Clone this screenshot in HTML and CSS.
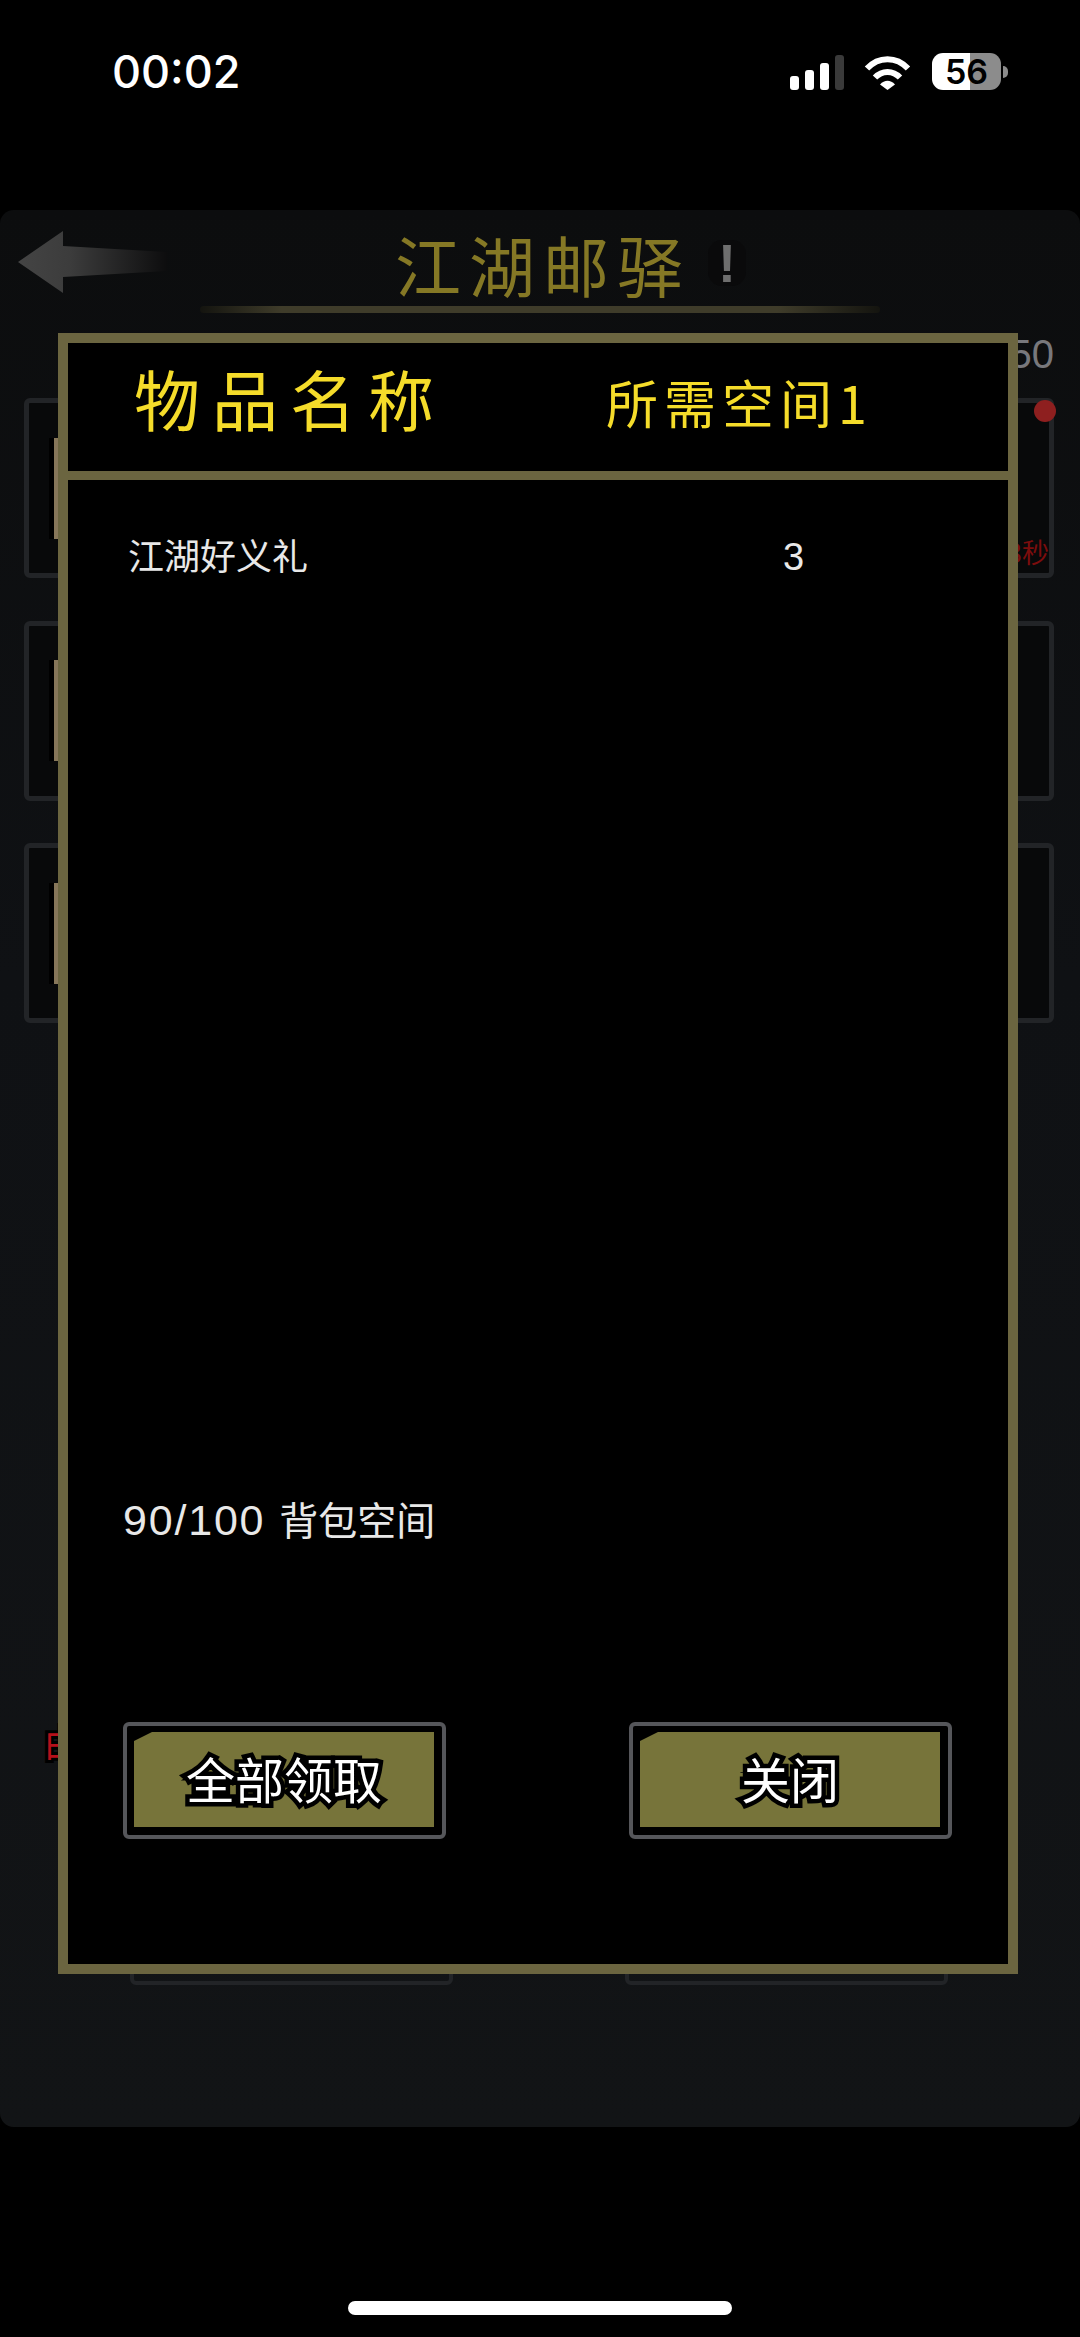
FILE: index.html
```html
<!DOCTYPE html>
<html lang="zh-CN">
<head>
<meta charset="utf-8">
<title>江湖邮驿</title>
<link rel="stylesheet" href="styles.css">
</head>
<body>
<div class="screen">
  <div class="status">
    <span class="time">00:02</span>
    <div class="status-icons">
      <div class="signal">
        <i class="b1"></i><i class="b2"></i><i class="b3"></i><i class="b4"></i>
      </div>
      <svg class="wifi" width="47" height="35" viewBox="0 0 47 35">
        <path d="M3 13.5C14.5 1 32.5 1 44 13.5" fill="none" stroke="#fff" stroke-width="6" stroke-linecap="butt"/>
        <path d="M11 22.5C18 15 29 15 36 22.5" fill="none" stroke="#fff" stroke-width="6" stroke-linecap="butt"/>
        <path d="M16 29.5C20.5 24.5 26.5 24.5 31 29.5L23.5 35Z" fill="#fff"/>
      </svg>
      <div class="battery"><span>56</span></div>
      <div class="nub"></div>
    </div>
  </div>

  <div class="panel">
    <div class="header">
      <div class="header-row">
        <svg class="back" width="152" height="64" viewBox="0 0 152 64">
          <defs>
            <linearGradient id="backFade" x1="0" x2="1" y1="0" y2="0">
              <stop offset="0" stop-color="#444"/>
              <stop offset="0.35" stop-color="#3c3c3c"/>
              <stop offset="1" stop-color="#0d0d0e"/>
            </linearGradient>
          </defs>
          <path d="M1 31L46 0V15L150 21V40L46 46V62Z" fill="url(#backFade)"/>
        </svg>
        <h1 class="title">江湖邮驿</h1>
        <span class="alert">!</span>
      </div>
      <div class="rule"></div>
    </div>

    <div class="count">50</div>

    <div class="cards">
      <div class="card">
        <i class="tab"></i>
        <i class="dot"></i>
        <span class="timer">3秒</span>
      </div>
      <div class="card"><i class="tab"></i></div>
      <div class="card"><i class="tab"></i></div>
    </div>

    <div class="notice">由</div>

    <div class="back-actions">
      <div class="back-btn"></div>
      <div class="back-btn"></div>
    </div>
  </div>

  <div class="home"><i class="home-bar"></i></div>

  <div class="modal">
    <div class="modal-head">
      <div class="head-name">物品名称</div>
      <div class="head-need">所需空间1</div>
    </div>
    <div class="modal-body">
      <div class="item">
        <span class="item-name">江湖好义礼</span>
        <span class="qty">3</span>
      </div>
      <div class="space"><span class="space-num">90/100</span> 背包空间</div>
      <div class="actions">
        <div class="btn"><div class="btn-fill">全部领取</div></div>
        <div class="btn"><div class="btn-fill">关闭</div></div>
      </div>
    </div>
  </div>
</div>
</body>
</html>
```

FILE: styles.css
```css
* { box-sizing: border-box; }

html, body {
  margin: 0;
  padding: 0;
  background: #000;
}

.screen {
  position: relative;
  width: 1080px;
  height: 2337px;
  overflow: hidden;
  display: flex;
  flex-direction: column;
  background: #000;
  font-family: "Liberation Sans", "Noto Sans CJK SC", sans-serif;
  color: #fff;
}

/* status bar */
.status {
  height: 210px;
  flex: none;
  display: flex;
  justify-content: space-between;
  align-items: flex-start;
  padding: 46px 72px 0 112px;
}

.time {
  font-family: Inter, "Liberation Sans", sans-serif;
  font-size: 45px;
  font-weight: 500;
  line-height: 52px;
  letter-spacing: 0;
}

.status-icons {
  display: flex;
  align-items: center;
  margin-top: 7px;
  height: 37px;
}

.signal {
  display: flex;
  align-items: flex-end;
  gap: 6px;
  height: 35px;
  margin-top: 1px;
}

.signal i {
  width: 9px;
  border-radius: 3px;
  background: #fff;
}

.signal .b1 { height: 14px; }
.signal .b2 { height: 20px; }
.signal .b3 { height: 27px; }
.signal .b4 { height: 35px; background: #3a3a3a; }

.wifi {
  margin-left: 20px;
  margin-top: 1px;
}

.battery {
  width: 69px;
  height: 37px;
  margin-left: 21px;
  border-radius: 11px;
  background: linear-gradient(90deg, #fff 0, #fff 55%, #8c8c8c 55%, #8c8c8c 100%);
  color: #000;
  font-family: Inter, "Liberation Sans", sans-serif;
  font-size: 34px;
  font-weight: 600;
  line-height: 37px;
  text-align: center;
}

.nub {
  width: 5px;
  height: 12px;
  margin-left: 2px;
  border-radius: 0 6px 6px 0;
  background: #8c8c8c;
}

/* dimmed page behind the dialog */
.panel {
  height: 1917px;
  flex: none;
  position: relative;
  border-radius: 14px;
  background: linear-gradient(180deg, #0c0d0e 0, #0f1114 40%, #121416 100%);
}

.header {
  height: 110px;
}

.header-row {
  height: 96px;
  padding-top: 10px;
  display: flex;
  align-items: center;
}

.back {
  flex: none;
  margin-left: 17px;
}

.title {
  margin: 0 0 0 226px;
  font-family: "Noto Sans CJK SC", sans-serif;
  font-size: 66px;
  font-weight: 400;
  line-height: 80px;
  letter-spacing: 8px;
  color: #857825;
}

.alert {
  width: 38px;
  height: 46px;
  margin-left: 17px;
  border-radius: 14px;
  background: #0a0a0b;
  color: #6e6e6e;
  font-size: 54px;
  font-weight: 700;
  line-height: 46px;
  text-align: center;
}

.rule {
  width: 680px;
  height: 7px;
  margin-left: 200px;
  background: linear-gradient(90deg, #14140f 0, #3f3c2a 12%, #3f3c2a 85%, #14140f 100%);
  border-radius: 4px;
}

.count {
  height: 78px;
  padding: 10px 26px 0 0;
  font-size: 40px;
  line-height: 48px;
  text-align: right;
  color: #78787c;
}

.cards {
  display: flex;
  flex-direction: column;
  gap: 42.5px;
  margin: 0 26px 0 24px;
}

.card {
  position: relative;
  height: 180px;
  display: flex;
  align-items: center;
  padding-left: 25px;
  border: 5px solid #222427;
  border-radius: 6px;
  background: #08090a;
}

.tab {
  width: 24px;
  height: 101px;
  background: #87775a;
  box-shadow: -5px 0 0 #000;
}

.dot {
  position: absolute;
  top: -3px;
  right: -7px;
  width: 22px;
  height: 22px;
  border-radius: 50%;
  background: #8e1f1f;
}

.timer {
  position: absolute;
  right: 0;
  bottom: 4px;
  font-family: "Noto Sans CJK SC", sans-serif;
  font-size: 27px;
  line-height: 34px;
  color: #7c0d0d;
}

.notice {
  margin-top: 698px;
  padding-left: 44px;
  height: 40px;
  font-family: "Noto Sans CJK SC", sans-serif;
  font-size: 36px;
  line-height: 40px;
  color: #b5101a;
  -webkit-text-stroke: 6px #000;
  paint-order: stroke fill;
}

.back-actions {
  margin-top: 107px;
  display: flex;
  justify-content: space-between;
  padding: 0 132px 0 130px;
}

.back-btn {
  width: 323px;
  height: 117px;
  border: 4px solid #222427;
  border-radius: 6px;
}

.home {
  flex: 1;
  display: flex;
  justify-content: center;
  align-items: flex-end;
  padding-bottom: 22px;
}

.home-bar {
  width: 384px;
  height: 14px;
  border-radius: 7px;
  background: #fff;
}

/* dialog */
.modal {
  position: absolute;
  left: 58px;
  top: 333px;
  width: 960px;
  height: 1641px;
  display: flex;
  flex-direction: column;
  border: 10px solid #6b6540;
  background: #000;
}

.modal-head {
  height: 137px;
  flex: none;
  display: grid;
  grid-template-columns: 538px 1fr;
  align-items: center;
  border-bottom: 9px solid #6b6540;
  color: #f5dc2a;
  font-family: "Noto Sans CJK SC", sans-serif;
}

.head-name {
  padding: 0 0 20px 66px;
  font-size: 66px;
  line-height: 80px;
  letter-spacing: 12px;
}

.head-need {
  padding-bottom: 10px;
  font-size: 52px;
  line-height: 66px;
  letter-spacing: 6px;
}

.modal-body {
  flex: 1;
  display: flex;
  flex-direction: column;
  padding: 52px 56px 0 55px;
  color: #e8e8e8;
}

.item {
  display: grid;
  grid-template-columns: 655px 1fr;
  height: 50px;
  padding-left: 5px;
  font-size: 38px;
  line-height: 50px;
}

.item-name {
  font-family: "Noto Sans CJK SC", sans-serif;
  font-size: 36px;
  line-height: 44px;
}

.space {
  margin-top: 913px;
  height: 50px;
  font-size: 39px;
  line-height: 50px;
}

.space-num {
  margin-right: 3px;
  font-size: 43px;
  letter-spacing: 1.8px;
}

.actions {
  margin-top: 177px;
  display: flex;
  justify-content: space-between;
}

.btn {
  width: 323px;
  height: 117px;
  padding: 6px 8px 8px 7px;
  border: 4px solid #55565a;
  border-radius: 6px;
}

.btn-fill {
  height: 95px;
  clip-path: polygon(0 9px, 18px 0, 100% 0, 100% 100%, 0 100%);
  background: #77743a;
  color: #fff;
  font-family: "Noto Sans CJK SC", sans-serif;
  font-size: 49px;
  line-height: 91px;
  text-align: center;
  -webkit-text-stroke: 9px #000;
  paint-order: stroke fill;
}
```
